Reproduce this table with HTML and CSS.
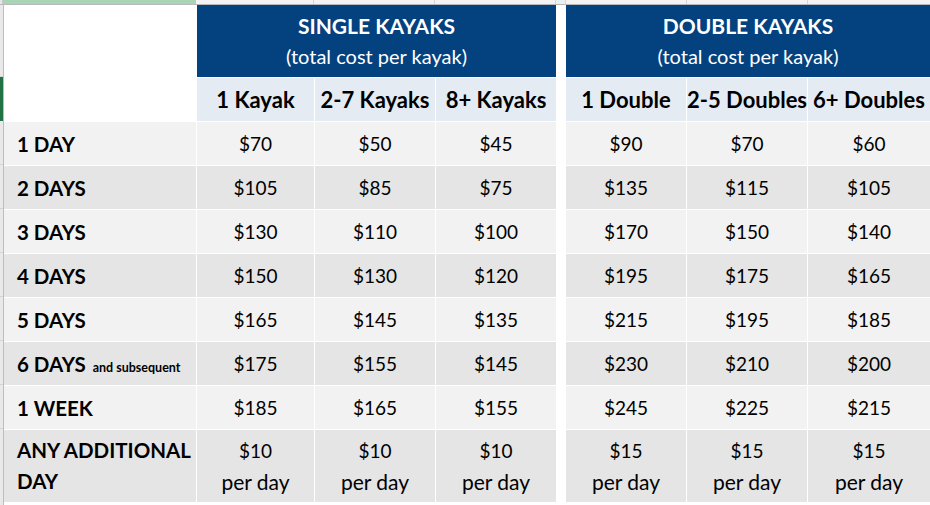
FILE: index.html
```html
<!DOCTYPE html>
<html>
<head>
<meta charset="utf-8">
<link rel="stylesheet" href="styles.css">
</head>
<body>
<div class="sheet">
  <div class="topstrip">
    <div class="ts-corner"></div>
    <div class="ts-sel"></div>
    <div class="ts-col"></div>
    <div class="ts-col"></div>
    <div class="ts-col"></div>
    <div class="ts-col ts-sp"></div>
    <div class="ts-col"></div>
    <div class="ts-col"></div>
    <div class="ts-col ts-last"></div>
  </div>
  <div class="main">
    <div class="rowhdr">
      <div class="rh rh-top"></div>
      <div class="rh rh-sel"></div>
      <div class="rh"></div><div class="rh"></div><div class="rh"></div><div class="rh"></div>
      <div class="rh"></div><div class="rh"></div><div class="rh"></div><div class="rh rh-last"></div>
    </div>
    <div class="grid">
      <div class="corner"></div>
      <div class="group g1"><span class="gtitle">SINGLE KAYAKS</span><span class="gsub">(total cost per kayak)</span></div>
      <div class="sp sp-head"></div>
      <div class="group g2"><span class="gtitle">DOUBLE KAYAKS</span><span class="gsub">(total cost per kayak)</span></div>

      <div class="ch c2">1 Kayak</div>
      <div class="ch c3">2-7 Kayaks</div>
      <div class="ch c4">8+ Kayaks</div>
      <div class="ch c6">1 Double</div>
      <div class="ch c7">2-5 Doubles</div>
      <div class="ch c8">6+ Doubles</div>

      <div class="lbl a">1 DAY</div><div class="v a">$70</div><div class="v a">$50</div><div class="v a">$45</div><div class="sp"></div><div class="v a">$90</div><div class="v a">$70</div><div class="v a">$60</div>
      <div class="lbl b">2 DAYS</div><div class="v b">$105</div><div class="v b">$85</div><div class="v b">$75</div><div class="sp"></div><div class="v b">$135</div><div class="v b">$115</div><div class="v b">$105</div>
      <div class="lbl a">3 DAYS</div><div class="v a">$130</div><div class="v a">$110</div><div class="v a">$100</div><div class="sp"></div><div class="v a">$170</div><div class="v a">$150</div><div class="v a">$140</div>
      <div class="lbl b">4 DAYS</div><div class="v b">$150</div><div class="v b">$130</div><div class="v b">$120</div><div class="sp"></div><div class="v b">$195</div><div class="v b">$175</div><div class="v b">$165</div>
      <div class="lbl a">5 DAYS</div><div class="v a">$165</div><div class="v a">$145</div><div class="v a">$135</div><div class="sp"></div><div class="v a">$215</div><div class="v a">$195</div><div class="v a">$185</div>
      <div class="lbl b"><span>6 DAYS <small class="note">and subsequent</small></span></div><div class="v b">$175</div><div class="v b">$155</div><div class="v b">$145</div><div class="sp"></div><div class="v b">$230</div><div class="v b">$210</div><div class="v b">$200</div>
      <div class="lbl a">1 WEEK</div><div class="v a">$185</div><div class="v a">$165</div><div class="v a">$155</div><div class="sp"></div><div class="v a">$245</div><div class="v a">$225</div><div class="v a">$215</div>
      <div class="lbl b two"><span>ANY ADDITIONAL<br>DAY</span></div>
      <div class="v b two"><span>$10</span><span class="pd">per day</span></div>
      <div class="v b two"><span>$10</span><span class="pd">per day</span></div>
      <div class="v b two"><span>$10</span><span class="pd">per day</span></div>
      <div class="sp"></div>
      <div class="v b two"><span>$15</span><span class="pd">per day</span></div>
      <div class="v b two"><span>$15</span><span class="pd">per day</span></div>
      <div class="v b two"><span>$15</span><span class="pd">per day</span></div>
    </div>
  </div>
</div>
</body>
</html>
```

FILE: styles.css
```css
html, body {
  margin: 0;
  padding: 0;
  background: #ffffff;
}
body {
  width: 930px;
  height: 505px;
  overflow: hidden;
  font-family: "Lato", "Open Sans", "Liberation Sans", sans-serif;
  color: #000;
}
.sheet {
  display: flex;
  flex-direction: column;
}
.topstrip {
  display: grid;
  grid-template-columns: 3px 193px 118px 121px 121px 10px 121px 121px 1fr;
  height: 4px;
  border-bottom: 1px solid #b9b9b9;
  background: #f3f3f3;
}
.ts-corner { background: #e6e6e6; border-right: 1px solid #c8c8c8; }
.ts-sel { background: #a9d5b7; }
.ts-col { border-right: 1px solid #d6d6d6; }
.ts-sp { background: #e9f0ef; }
.ts-last { border-right: none; }

.main {
  display: flex;
}
.rowhdr {
  width: 3px;
  border-right: 1px solid #bdbdbd;
  background: #e9e9e9;
  display: grid;
  grid-template-rows: 72px 44px repeat(7, 44px) 1fr;
  height: 500px;
}
.rh { border-bottom: 1px solid #d4d4d4; }
.rh-sel { background: #217346; border-bottom: none; }
.rh-last { border-bottom: none; }

.grid {
  display: grid;
  grid-template-columns: 192px 117px 120px 120px 8px 120px 120px 122px;
  grid-template-rows: 72px 43px repeat(7, 43px) 72px;
  gap: 1px;
  background: #ffffff;
}
.corner {
  grid-row: 1 / 3;
  grid-column: 1;
  background: #ffffff;
}
.group {
  grid-row: 1;
  background: #03427f;
  color: #ffffff;
  display: flex;
  flex-direction: column;
  align-items: center;
  justify-content: center;
  line-height: 30px;
}
.g1 { grid-column: 2 / 5; }
.g2 { grid-column: 6 / 9; }
.sp-head { grid-row: 1 / 3; grid-column: 5; }
.gtitle {
  font-weight: 700;
  font-size: 21px;
}
.gsub {
  font-size: 20px;
  font-weight: 400;
}
.ch {
  grid-row: 2;
  background: #e4ebf3;
  font-weight: 700;
  font-size: 22px;
  display: flex;
  align-items: center;
  justify-content: center;
  white-space: nowrap;
}
.c2 { grid-column: 2; }
.c3 { grid-column: 3; }
.c4 { grid-column: 4; }
.c6 { grid-column: 6; }
.c7 { grid-column: 7; }
.c8 { grid-column: 8; }

.sp { background: #ffffff; }
.a { background: #f2f2f2; }
.b { background: #e5e5e5; }
.lbl {
  font-weight: 700;
  font-size: 20.5px;
  display: flex;
  align-items: center;
  padding-left: 13px;
  white-space: nowrap;
}
.note {
  font-size: 12.5px;
  font-weight: 700;
  margin-left: 2px;
}
.v {
  font-size: 19px;
  display: flex;
  align-items: center;
  justify-content: center;
  text-align: center;
}
.v.two {
  flex-direction: column;
}
.pd {
  font-size: 21px;
}
.two {
  line-height: 31px;
}
```
